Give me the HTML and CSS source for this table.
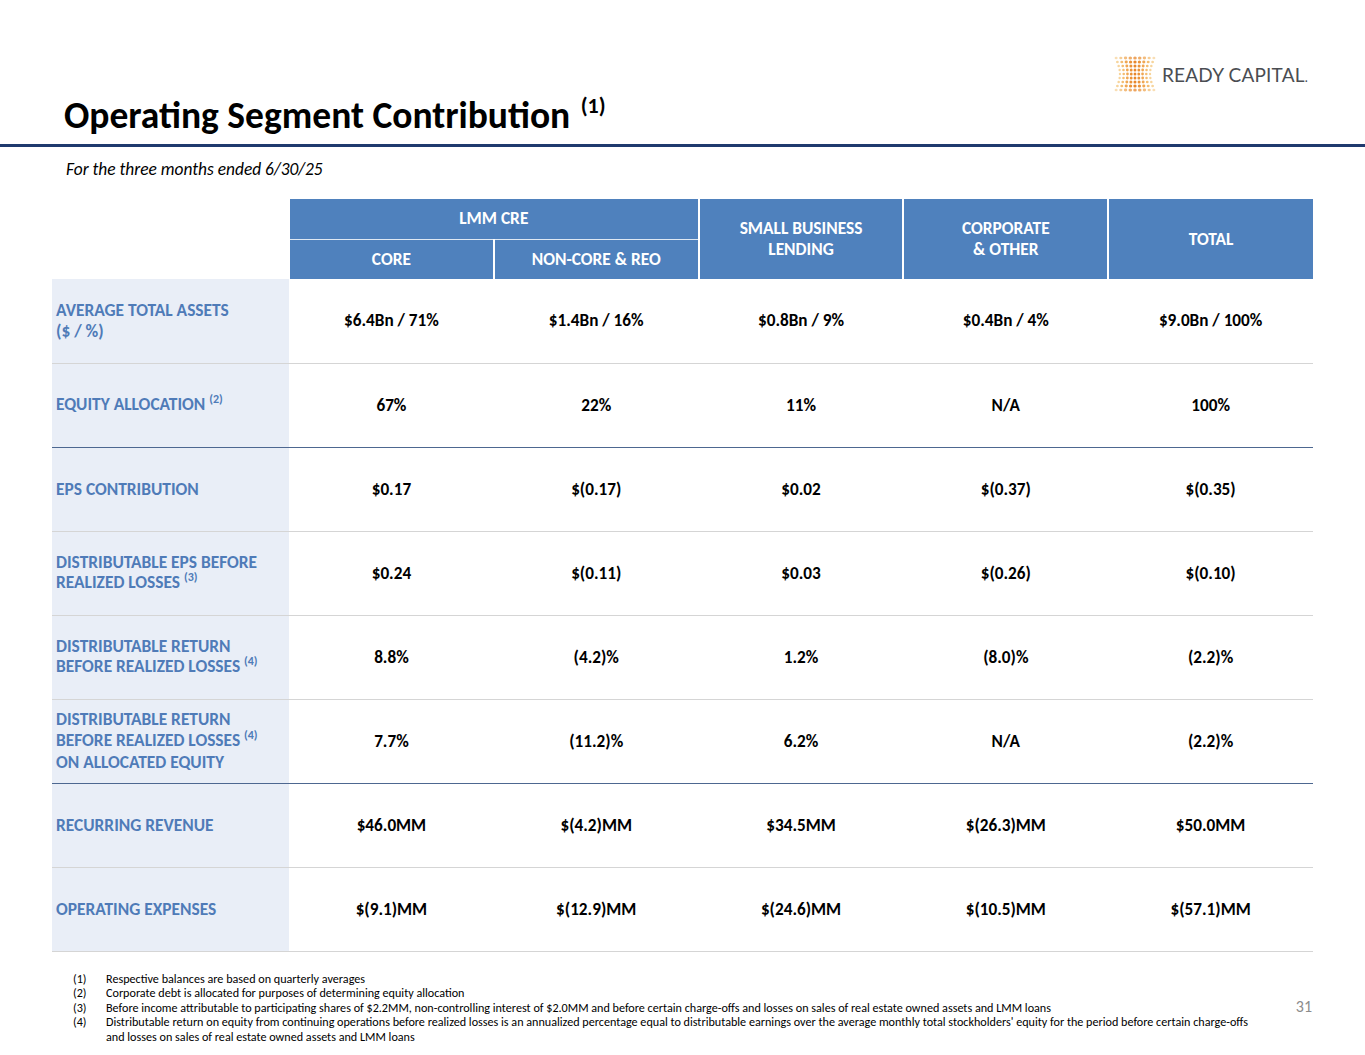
FILE: index.html
```html
<!DOCTYPE html>
<html>
<head>
<meta charset="utf-8">
<title>Operating Segment Contribution</title>
<link rel="stylesheet" href="styles.css">
</head>
<body>
<div class="slide">
  <header class="header">
    <div class="logo-row">
      <div class="logo">
        <svg class="logo-mark" width="42" height="38" viewBox="0 0 42 38">
          <defs>
            <g id="dotrow">
              <circle cx="-16" cy="0" r="1.25" fill="#f7d49b"/>
              <circle cx="-12" cy="0" r="1.35" fill="#f4bd72"/>
              <circle cx="-8" cy="0" r="1.45" fill="#f0a652"/>
              <circle cx="-4" cy="0" r="1.5" fill="#eb9236"/>
              <circle cx="0" cy="0" r="1.5" fill="#e8862a"/>
              <circle cx="4" cy="0" r="1.5" fill="#eb9236"/>
              <circle cx="8" cy="0" r="1.45" fill="#f0a652"/>
              <circle cx="12" cy="0" r="1.35" fill="#f4bd72"/>
              <circle cx="16" cy="0" r="1.25" fill="#f7d49b"/>
            </g>
          </defs>
          <use href="#dotrow" transform="translate(21,3) scale(1.18,1)" opacity="0.75"/>
          <use href="#dotrow" transform="translate(21,7) scale(1.1,1)"/>
          <use href="#dotrow" transform="translate(21,11) scale(1.02,1)"/>
          <use href="#dotrow" transform="translate(21,15) scale(0.96,1)"/>
          <use href="#dotrow" transform="translate(21,19) scale(0.94,1)"/>
          <use href="#dotrow" transform="translate(21,23) scale(0.96,1)"/>
          <use href="#dotrow" transform="translate(21,27) scale(1.02,1)"/>
          <use href="#dotrow" transform="translate(21,31) scale(1.1,1)"/>
          <use href="#dotrow" transform="translate(21,35) scale(1.18,1)" opacity="0.75"/>
        </svg>
        <span class="logo-text">READY CAPITAL<span class="logo-dot">.</span></span>
      </div>
    </div>
    <h1 class="title">Operating Segment Contribution <sup class="title-sup">(1)</sup></h1>
  </header>
  <div class="rule"></div>
  <p class="subtitle">For the three months ended 6/30/25</p>

  <table class="seg-table">
    <colgroup>
      <col class="c-label">
      <col class="c-val"><col class="c-val"><col class="c-val"><col class="c-val"><col class="c-val">
    </colgroup>
    <thead>
      <tr class="h1row">
        <th class="blank" rowspan="2"></th>
        <th class="hd hd-group" colspan="2">LMM CRE</th>
        <th class="hd hd-tall" rowspan="2">SMALL BUSINESS<br>LENDING</th>
        <th class="hd hd-tall" rowspan="2">CORPORATE<br>&amp; OTHER</th>
        <th class="hd hd-tall" rowspan="2">TOTAL</th>
      </tr>
      <tr class="h2row">
        <th class="hd hd-sub hd-first">CORE</th>
        <th class="hd hd-sub">NON-CORE &amp; REO</th>
      </tr>
    </thead>
    <tbody>
      <tr>
        <th class="lbl">AVERAGE TOTAL ASSETS<br>($ / %)</th>
        <td>$6.4Bn / 71%</td><td>$1.4Bn / 16%</td><td>$0.8Bn / 9%</td><td>$0.4Bn / 4%</td><td>$9.0Bn / 100%</td>
      </tr>
      <tr class="sep">
        <th class="lbl">EQUITY ALLOCATION <sup>(2)</sup></th>
        <td>67%</td><td>22%</td><td>11%</td><td>N/A</td><td>100%</td>
      </tr>
      <tr>
        <th class="lbl">EPS CONTRIBUTION</th>
        <td>$0.17</td><td>$(0.17)</td><td>$0.02</td><td>$(0.37)</td><td>$(0.35)</td>
      </tr>
      <tr>
        <th class="lbl">DISTRIBUTABLE EPS BEFORE<br>REALIZED LOSSES <sup>(3)</sup></th>
        <td>$0.24</td><td>$(0.11)</td><td>$0.03</td><td>$(0.26)</td><td>$(0.10)</td>
      </tr>
      <tr>
        <th class="lbl">DISTRIBUTABLE RETURN<br>BEFORE REALIZED LOSSES <sup>(4)</sup></th>
        <td>8.8%</td><td>(4.2)%</td><td>1.2%</td><td>(8.0)%</td><td>(2.2)%</td>
      </tr>
      <tr class="sep">
        <th class="lbl">DISTRIBUTABLE RETURN<br>BEFORE REALIZED LOSSES <sup>(4)</sup><br>ON ALLOCATED EQUITY</th>
        <td>7.7%</td><td>(11.2)%</td><td>6.2%</td><td>N/A</td><td>(2.2)%</td>
      </tr>
      <tr>
        <th class="lbl">RECURRING REVENUE</th>
        <td>$46.0MM</td><td>$(4.2)MM</td><td>$34.5MM</td><td>$(26.3)MM</td><td>$50.0MM</td>
      </tr>
      <tr>
        <th class="lbl">OPERATING EXPENSES</th>
        <td>$(9.1)MM</td><td>$(12.9)MM</td><td>$(24.6)MM</td><td>$(10.5)MM</td><td>$(57.1)MM</td>
      </tr>
    </tbody>
  </table>

  <footer class="footer">
    <ol class="notes">
      <li><span class="n">(1)</span><span class="t">Respective balances are based on quarterly averages</span></li>
      <li><span class="n">(2)</span><span class="t">Corporate debt is allocated for purposes of determining equity allocation</span></li>
      <li><span class="n">(3)</span><span class="t">Before income attributable to participating shares of $2.2MM, non-controlling interest of $2.0MM and before certain charge-offs and losses on sales of real estate owned assets and LMM loans</span></li>
      <li><span class="n">(4)</span><span class="t">Distributable return on equity from continuing operations before realized losses is an annualized percentage equal to distributable earnings over the average monthly total stockholders' equity for the period before certain charge-offs<br>and losses on sales of real estate owned assets and LMM loans</span></li>
    </ol>
    <div class="page-num">31</div>
  </footer>
</div>
</body>
</html>
```

FILE: styles.css
```css
* { box-sizing: border-box; }

html, body {
  margin: 0;
  padding: 0;
  background: #ffffff;
}

body {
  font-family: Carlito, Calibri, "Open Sans", sans-serif;
  color: #000;
}

.slide {
  width: 1365px;
  height: 1055px;
  overflow: hidden;
}

.header {
  padding: 55px 57px 0 64px;
}

.logo-row {
  display: flex;
  justify-content: flex-end;
  height: 40px;
}

.logo {
  display: flex;
  align-items: center;
  gap: 6px;
  height: 38px;
}

.logo-mark { display: block; }

.logo-text {
  font-family: Lato, "Open Sans", sans-serif;
  font-weight: 400;
  font-size: 19px;
  letter-spacing: 0.2px;
  color: #4a4d52;
  line-height: 1;
}

.logo-dot { font-size: 13px; }

.title {
  margin: 0;
  font-size: 37.5px;
  font-weight: 700;
  line-height: 40px;
  height: 46px;
  color: #000;
  white-space: nowrap;
}

.title-sup {
  font-size: 22px;
  vertical-align: 0;
  position: relative;
  top: -15px;
  margin-left: 2px;
}

.rule {
  height: 3px;
  background: #1f3a6e;
  margin-top: 3px;
}

.subtitle {
  margin: 12px 0 0 66px;
  font-style: italic;
  font-size: 17.4px;
  line-height: 20px;
  height: 20px;
}

.seg-table {
  margin: 20px 0 0 52px;
  width: 1261px;
  table-layout: fixed;
  border-collapse: collapse;
}

.c-label { width: 237px; }
.c-val { width: 204.8px; }

.h1row { height: 40px; }
.h2row { height: 40px; }

.blank { background: #fff; padding: 0; }

.hd {
  background: #4f81bd;
  color: #ffffff;
  font-weight: 700;
  font-size: 17.4px;
  line-height: 21px;
  text-align: center;
  vertical-align: middle;
  padding: 0 4px;
  border-left: 2px solid #ffffff;
}

.hd-group { border-bottom: 1px solid #dfe8f3; }
.hd-sub.hd-first { border-left: 2px solid #ffffff; }

tbody tr { height: 84px; }

tbody tr > * {
  border-bottom: 1px solid #d5d5d5;
}

tbody tr.sep > * {
  border-bottom: 1px solid #4d6790;
}

.lbl {
  background: #e9eef7;
  color: #4f7bb8;
  font-weight: 700;
  font-size: 17.4px;
  line-height: 20.5px;
  text-align: left;
  padding: 0 4px;
  vertical-align: middle;
  white-space: nowrap;
}

.lbl sup {
  font-size: 12px;
  vertical-align: 0;
  position: relative;
  top: -7px;
}

tbody td {
  text-align: center;
  vertical-align: middle;
  font-weight: 700;
  font-size: 17.2px;
  color: #000;
  padding: 0;
}

.footer {
  display: flex;
  justify-content: space-between;
  align-items: flex-start;
  padding: 20px 53px 0 73px;
}

.notes {
  list-style: none;
  margin: 0;
  padding: 0;
  font-size: 12.15px;
  line-height: 14.5px;
  color: #000;
}

.notes li { display: flex; }

.notes .n { width: 33px; flex: none; }

.page-num {
  font-size: 16px;
  color: #8c8c8c;
  margin-top: 25px;
}
```
